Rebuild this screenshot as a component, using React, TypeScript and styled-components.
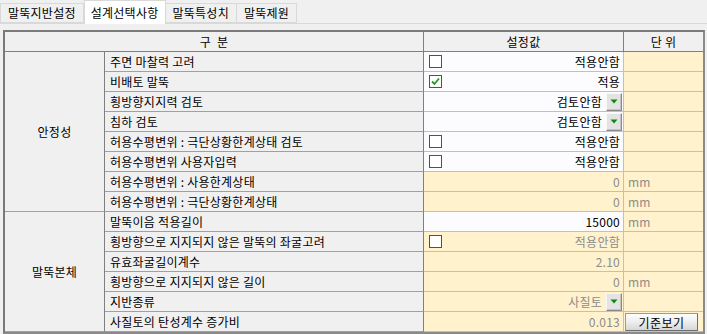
import React from "react";
import styled, { createGlobalStyle } from "styled-components";

const Global = createGlobalStyle`
  html, body { margin: 0; padding: 0; background: #f0f0f0; }
  body {
    font-family: "Noto Sans CJK KR", "Noto Sans", sans-serif;
    font-size: 12px;
    letter-spacing: 0.25px;
    color: #000;
    width: 707px;
    height: 334px;
    overflow: hidden;
  }
`;

const Page = styled.div`
  width: 707px;
  height: 334px;
  display: flex;
  flex-direction: column;
`;

const TabBar = styled.div`
  display: flex;
  align-items: flex-end;
  height: 23px;
  border-bottom: 1px solid #d9d9d9;
`;

const Tab = styled.div<{ $active?: boolean; $first?: boolean }>`
  box-sizing: border-box;
  height: ${(p) => (p.$active ? "24px" : "20px")};
  margin-bottom: ${(p) => (p.$active ? "-1px" : "0")};
  padding: 0 ${(p) => (p.$active ? "6px" : "7px")};
  display: flex;
  align-items: center;
  background: ${(p) => (p.$active ? "#ffffff" : "#f0f0f0")};
  border: 1px solid #d9d9d9;
  border-bottom: ${(p) => (p.$active ? "none" : "1px solid #d9d9d9")};
  margin-left: ${(p) => (p.$active || p.$first ? "0" : "-1px")};
  position: relative;
  z-index: ${(p) => (p.$active ? 1 : 0)};
  line-height: 18px;
  white-space: nowrap;
`;

const Grid = styled.div`
  margin: 6px 2px 0 3px;
  border: 2px solid #7a7a7a;
  border-right-color: #8a8a8a;
  border-bottom-color: #8a8a8a;
  display: grid;
  grid-template-columns: 100px 319px 200px 1fr;
  grid-auto-rows: 20px;
  background: #f0f0f0;
`;

const HeadCell = styled.div<{ $span?: number; $last?: boolean }>`
  box-sizing: border-box;
  grid-column: span ${(p) => p.$span ?? 1};
  border-right: ${(p) => (p.$last ? "none" : "1px solid #7f7f7f")};
  border-bottom: 1px solid #7f7f7f;
  display: flex;
  align-items: center;
  justify-content: center;
  white-space: pre;
  background: #f0f0f0;
  height: 20px;
`;

const GroupCell = styled.div<{ $rows: number }>`
  box-sizing: border-box;
  grid-row: span ${(p) => p.$rows};
  border-right: 1px solid #7f7f7f;
  border-bottom: 1px solid #a0a0a0;
  display: flex;
  align-items: center;
  justify-content: center;
  background: #f0f0f0;
`;

const ItemCell = styled.div`
  box-sizing: border-box;
  border-right: 1px solid #7f7f7f;
  border-bottom: 1px solid #a0a0a0;
  display: flex;
  align-items: center;
  padding-left: 5px;
  background: #f0f0f0;
  white-space: nowrap;
  overflow: hidden;
`;

const ValueCell = styled.div<{ $yellow?: boolean; $select?: boolean }>`
  box-sizing: border-box;
  border-right: 1px solid #c0c0c0;
  border-bottom: 1px solid #c0c0c0;
  display: flex;
  align-items: center;
  padding: 0 ${(p) => (p.$select ? "1px" : "3px")} 0 5px;
  background: ${(p) => (p.$yellow ? "#fff2cc" : "#fcfcfe")};
  white-space: nowrap;
`;

const ValueText = styled.span<{ $dim?: boolean }>`
  margin-left: auto;
  color: ${(p) => (p.$dim ? "#8c8c8c" : "#000")};
`;

const UnitCell = styled.div<{ $button?: boolean }>`
  box-sizing: border-box;
  border-bottom: 1px solid #c0c0c0;
  display: flex;
  align-items: center;
  padding-left: ${(p) => (p.$button ? "0" : "4px")};
  background: #fff2cc;
  color: #8c8c8c;
`;

const CheckBox = styled.span`
  box-sizing: border-box;
  width: 13px;
  height: 13px;
  border: 1px solid #2f5b76;
  background: #ffffff;
  display: inline-flex;
  align-items: center;
  justify-content: center;
  flex: none;
`;

const DropBtn = styled.span`
  box-sizing: border-box;
  width: 16px;
  height: 18px;
  margin-left: 4px;
  background: #e3e3e3;
  border: 1px solid;
  border-color: #f8f8f8 #8a8a8a #8a8a8a #f8f8f8;
  box-shadow: inset -1px -1px 0 #c4c4c4;
  display: inline-flex;
  align-items: center;
  justify-content: center;
  flex: none;
`;

const StdButton = styled.button`
  box-sizing: border-box;
  margin: 0 2px 0 1px;
  width: 73px;
  height: 18px;
  padding: 0;
  font: inherit;
  color: #000;
  border: 1px solid #9a9a9a;
  border-right-color: #6f6f6f;
  border-bottom-color: #6f6f6f;
  background: linear-gradient(to bottom, #fdfdfd 0%, #eeeeee 50%, #d6d6d6 100%);
  letter-spacing: 0.5px;
`;

type Row = {
  label: string;
  value: string;
  kind?: "check" | "select" | "text";
  checked?: boolean;
  yellow?: boolean;
  dim?: boolean;
  unit?: string;
  button?: string;
};

const group1: Row[] = [
  { label: "주면 마찰력 고려", value: "적용안함", kind: "check" },
  { label: "비배토 말뚝", value: "적용", kind: "check", checked: true },
  { label: "횡방향지지력 검토", value: "검토안함", kind: "select" },
  { label: "침하 검토", value: "검토안함", kind: "select" },
  { label: "허용수평변위 : 극단상황한계상태 검토", value: "적용안함", kind: "check" },
  { label: "허용수평변위 사용자입력", value: "적용안함", kind: "check" },
  { label: "허용수평변위 : 사용한계상태", value: "0", yellow: true, dim: true, unit: "mm" },
  { label: "허용수평변위 : 극단상황한계상태", value: "0", yellow: true, dim: true, unit: "mm" },
];

const group2: Row[] = [
  { label: "말뚝이음 적용길이", value: "15000", unit: "mm" },
  { label: "횡방향으로 지지되지 않은 말뚝의 좌굴고려", value: "적용안함", kind: "check", yellow: true, dim: true },
  { label: "유효좌굴길이계수", value: "2.10", yellow: true, dim: true },
  { label: "횡방향으로 지지되지 않은 길이", value: "0", yellow: true, dim: true, unit: "mm" },
  { label: "지반종류", value: "사질토", kind: "select", yellow: true, dim: true },
  { label: "사질토의 탄성계수 증가비", value: "0.013", yellow: true, dim: true, button: "기준보기" },
];

const Check = () => (
  <svg width="11" height="11" viewBox="0 0 11 11">
    <path d="M2 5.5 L4.5 8 L9 2.5" fill="none" stroke="#1f9a1f" strokeWidth="1.8" />
  </svg>
);

const Arrow = () => (
  <svg width="8" height="5" viewBox="0 0 8 5">
    <path d="M0.5 0.5 H7.5 L4 4.5 Z" fill="#0b8a0b" />
  </svg>
);

const RowView: React.FC<{ row: Row }> = ({ row }) => (
  <>
    <ItemCell>{row.label}</ItemCell>
    <ValueCell $yellow={row.yellow} $select={row.kind === "select"}>
      {row.kind === "check" && <CheckBox>{row.checked && <Check />}</CheckBox>}
      <ValueText $dim={row.dim}>{row.value}</ValueText>
      {row.kind === "select" && (
        <DropBtn>
          <Arrow />
        </DropBtn>
      )}
    </ValueCell>
    {row.button ? (
      <UnitCell $button>
        <StdButton>{row.button}</StdButton>
      </UnitCell>
    ) : (
      <UnitCell>{row.unit ?? ""}</UnitCell>
    )}
  </>
);

export default function App() {
  return (
    <Page>
      <Global />
      <TabBar>
        <Tab $first>말뚝지반설정</Tab>
        <Tab $active>설계선택사항</Tab>
        <Tab>말뚝특성치</Tab>
        <Tab>말뚝제원</Tab>
      </TabBar>
      <Grid>
        <HeadCell $span={2}>{"구  분"}</HeadCell>
        <HeadCell>설정값</HeadCell>
        <HeadCell $last>{"단 위"}</HeadCell>
        <GroupCell $rows={group1.length}>안정성</GroupCell>
        {group1.map((r, i) => (
          <RowView key={"a" + i} row={r} />
        ))}
        <GroupCell $rows={group2.length}>말뚝본체</GroupCell>
        {group2.map((r, i) => (
          <RowView key={"b" + i} row={r} />
        ))}
      </Grid>
    </Page>
  );
}
